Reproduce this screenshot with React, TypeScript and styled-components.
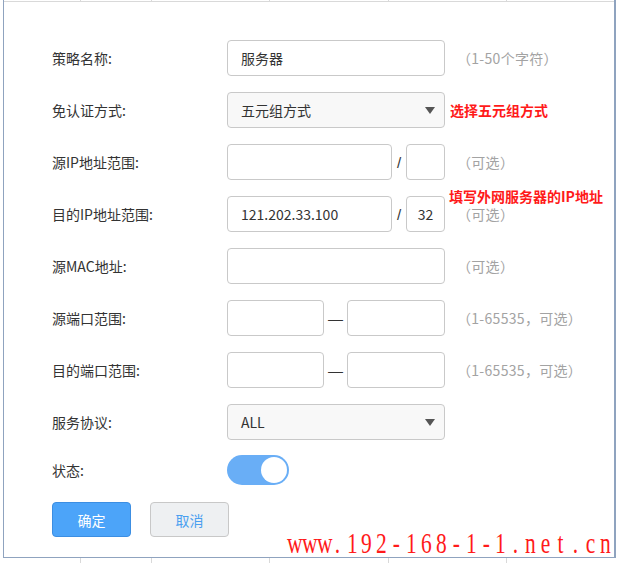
import styled, { createGlobalStyle } from "styled-components";

const GlobalStyle = createGlobalStyle`
  html, body {
    margin: 0;
    padding: 0;
    background: #ffffff;
  }
  body {
    font-family: "Noto Sans CJK SC", "Noto Sans", sans-serif;
    color: #333333;
  }
`;

const Page = styled.div`
  position: relative;
  width: 618px;
  height: 563px;
  display: flex;
  flex-direction: column;
  overflow: hidden;
  background: #ffffff;
`;

const Frame = styled.div`
  flex: 1;
  margin: 0 2px 0 3px;
  display: flex;
  flex-direction: column;
  border-left: 1px solid #8fa3bf;
  border-right: 2px solid #8fa3bf;
  border-bottom: 1px solid #8fa3bf;
`;

const Strip = styled.div<{ $offset?: number }>`
  display: flex;
  height: ${(p) => (p.$offset ? 5 : 1)}px;
  margin-left: ${(p) => p.$offset || 0}px;
  border-bottom: ${(p) => (p.$offset ? "none" : "1px solid #d9d9d9")};
`;

const Cell = styled.div<{ $w: number }>`
  width: ${(p) => p.$w}px;
  border-right: 1px solid #d9d9d9;
  flex-shrink: 0;
`;

const Form = styled.div`
  display: flex;
  flex-direction: column;
  gap: 16px;
  padding: 38px 0 0 48px;
`;

const Row = styled.div<{ $h?: number; $mt?: number }>`
  position: relative;
  display: flex;
  align-items: center;
  height: ${(p) => p.$h || 36}px;
  margin-top: ${(p) => p.$mt || 0}px;
`;

const Label = styled.div`
  width: 175px;
  flex-shrink: 0;
  font-size: 14px;
  line-height: 20px;
  color: #333333;
`;

const Input = styled.input<{ $w?: number; $center?: boolean }>`
  box-sizing: border-box;
  width: ${(p) => p.$w || 218}px;
  height: 36px;
  margin: 0;
  border: 1px solid #c9c9c9;
  border-radius: 4px;
  padding: ${(p) => (p.$center ? "0 4px" : "0 13px")};
  text-align: ${(p) => (p.$center ? "center" : "left")};
  font-family: "Noto Sans CJK SC", "Noto Sans", sans-serif;
  font-size: 14px;
  color: #333333;
  background: #ffffff;
  outline: none;
`;

const Select = styled.div`
  box-sizing: border-box;
  width: 218px;
  height: 36px;
  display: flex;
  align-items: center;
  justify-content: space-between;
  padding: 0 9px 0 13px;
  border: 1px solid #c9c9c9;
  border-radius: 4px;
  background: #f8f8f8;
  font-size: 14px;
  color: #333333;
`;

const Caret = styled.span`
  width: 0;
  height: 0;
  border-left: 5px solid transparent;
  border-right: 5px solid transparent;
  border-top: 7px solid #555555;
`;

const Sep = styled.span<{ $w: number }>`
  width: ${(p) => p.$w}px;
  text-align: center;
  font-family: "Liberation Sans", "Noto Sans", sans-serif;
  font-size: 15px;
  color: #333333;
`;

const Hint = styled.span`
  margin-left: 12px;
  font-size: 14px;
  letter-spacing: 0.3px;
  color: #a3a3a3;
  white-space: nowrap;
`;

const Note = styled.span`
  margin-left: 5px;
  font-size: 14px;
  line-height: 16px;
  font-weight: bold;
  color: #ff1a1a;
  white-space: nowrap;
`;

const FloatNote = styled(Note)`
  position: absolute;
  left: 397px;
  top: -8px;
  margin: 0;
`;

const Toggle = styled.div`
  box-sizing: border-box;
  width: 62px;
  height: 30px;
  padding: 2px;
  display: flex;
  justify-content: flex-end;
  border-radius: 15px;
  background: #69aef6;
`;

const Knob = styled.div`
  width: 26px;
  height: 26px;
  border-radius: 50%;
  background: #ffffff;
`;

const Buttons = styled.div`
  display: flex;
  gap: 19px;
  margin-top: 1px;
`;

const Button = styled.button<{ $primary?: boolean }>`
  box-sizing: border-box;
  width: 79px;
  height: 35px;
  border-radius: 4px;
  border: 1px solid ${(p) => (p.$primary ? "#3c8ee2" : "#c8c8c8")};
  background: ${(p) => (p.$primary ? "#4ca4f9" : "#eef0f2")};
  color: ${(p) => (p.$primary ? "#ffffff" : "#4a9ff0")};
  font-family: "Noto Sans CJK SC", "Noto Sans", sans-serif;
  font-size: 14px;
  cursor: pointer;
`;

const Watermark = styled.div`
  position: absolute;
  left: 285px;
  top: 528px;
  display: flex;
  color: #ff1a1a;
  font-family: "Liberation Serif", "DejaVu Serif", serif;
  font-size: 29px;
  line-height: 30px;
`;

const Glyph = styled.span`
  display: inline-block;
  width: 14.9px;
  text-align: center;
  transform: scaleX(0.74);
`;

const gridCells = [76, 70, 117, 118, 117];
const siteName = "www.192-168-1-1.net.cn";

function App() {
  return (
    <>
      <GlobalStyle />
      <Page>
        <Frame>
          <Strip>
            {gridCells.map((w, i) => (
              <Cell key={i} $w={w} />
            ))}
          </Strip>
          <Form>
            <Row>
              <Label>策略名称:</Label>
              <Input defaultValue="服务器" />
              <Hint>（1-50个字符）</Hint>
            </Row>
            <Row>
              <Label>免认证方式:</Label>
              <Select>
                五元组方式
                <Caret />
              </Select>
              <Note>选择五元组方式</Note>
            </Row>
            <Row>
              <Label>源IP地址范围:</Label>
              <Input $w={165} />
              <Sep $w={14}>/</Sep>
              <Input $w={39} $center />
              <Hint>（可选）</Hint>
            </Row>
            <Row>
              <Label>目的IP地址范围:</Label>
              <Input $w={165} defaultValue="121.202.33.100" />
              <Sep $w={14}>/</Sep>
              <Input $w={39} $center defaultValue="32" />
              <Hint>（可选）</Hint>
              <FloatNote>填写外网服务器的IP地址</FloatNote>
            </Row>
            <Row>
              <Label>源MAC地址:</Label>
              <Input />
              <Hint>（可选）</Hint>
            </Row>
            <Row>
              <Label>源端口范围:</Label>
              <Input $w={97} />
              <Sep $w={23}>—</Sep>
              <Input $w={98} />
              <Hint>（1-65535，可选）</Hint>
            </Row>
            <Row>
              <Label>目的端口范围:</Label>
              <Input $w={97} />
              <Sep $w={23}>—</Sep>
              <Input $w={98} />
              <Hint>（1-65535，可选）</Hint>
            </Row>
            <Row>
              <Label>服务协议:</Label>
              <Select>
                ALL
                <Caret />
              </Select>
            </Row>
            <Row $h={30} $mt={-1}>
              <Label>状态:</Label>
              <Toggle>
                <Knob />
              </Toggle>
            </Row>
            <Buttons>
              <Button $primary>确定</Button>
              <Button>取消</Button>
            </Buttons>
          </Form>
        </Frame>
        <Strip $offset={3}>
          {gridCells.map((w, i) => (
            <Cell key={i} $w={w + (i === 0 ? 1 : 0)} />
          ))}
        </Strip>
        <Watermark>
          {siteName.split("").map((c, i) => (
            <Glyph key={i}>{c}</Glyph>
          ))}
        </Watermark>
      </Page>
    </>
  );
}

export default App;
